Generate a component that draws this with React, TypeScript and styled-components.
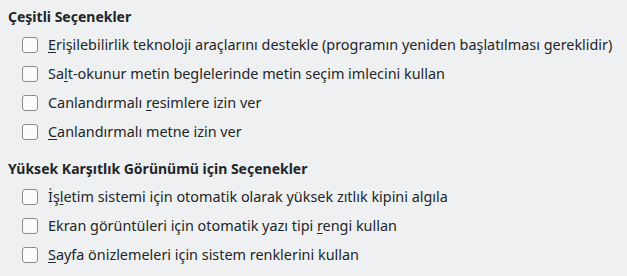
import styled, { createGlobalStyle } from 'styled-components';

const GlobalStyle = createGlobalStyle`
  html, body {
    margin: 0;
    padding: 0;
    background: #eff0f1;
  }
`;

type Option = {
  label: string;
  mnemonic?: number;
};

const groups: { title: string; options: Option[] }[] = [
  {
    title: 'Çeşitli Seçenekler',
    options: [
      { label: 'Erişilebilirlik teknoloji araçlarını destekle (programın yeniden başlatılması gereklidir)', mnemonic: 0 },
      { label: 'Salt-okunur metin beglelerinde metin seçim imlecini kullan', mnemonic: 2 },
      { label: 'Canlandırmalı resimlere izin ver', mnemonic: 14 },
      { label: 'Canlandırmalı metne izin ver', mnemonic: 0 },
    ],
  },
  {
    title: 'Yüksek Karşıtlık Görünümü için Seçenekler',
    options: [
      { label: 'İşletim sistemi için otomatik olarak yüksek zıtlık kipini algıla', mnemonic: 2 },
      { label: 'Ekran görüntüleri için otomatik yazı tipi rengi kullan', mnemonic: 42 },
      { label: 'Sayfa önizlemeleri için sistem renklerini kullan', mnemonic: 0 },
    ],
  },
];

const Label = ({ option }: { option: Option }) => {
  const { label, mnemonic } = option;
  if (mnemonic === undefined) return <>{label}</>;
  return (
    <>
      {label.slice(0, mnemonic)}
      <Mnemonic>{label[mnemonic]}</Mnemonic>
      {label.slice(mnemonic + 1)}
    </>
  );
};

const App = () => {
  return (
    <Page>
      <GlobalStyle />
      {groups.map((group) => (
        <Group key={group.title}>
          <Title>{group.title}</Title>
          <List>
            {group.options.map((option) => (
              <Row key={option.label}>
                <Box />
                <Text>
                  <Label option={option} />
                </Text>
              </Row>
            ))}
          </List>
        </Group>
      ))}
    </Page>
  );
};

const Page = styled.div`
  width: 627px;
  height: 276px;
  box-sizing: border-box;
  padding: 7px 8px 0 8px;
  background: #eff0f1;
  color: #232629;
  font-family: 'Noto Sans', 'Open Sans', sans-serif;
  font-size: 14.4px;
  display: flex;
  flex-direction: column;
  gap: 13px;
`;

const Group = styled.div`
  display: flex;
  flex-direction: column;
`;

const Title = styled.div`
  font-size: 14px;
  font-weight: 700;
  line-height: 20px;
  margin-bottom: 3px;
`;

const List = styled.div`
  display: flex;
  flex-direction: column;
`;

const Row = styled.label`
  display: flex;
  align-items: center;
  height: 29px;
  padding-left: 14px;
  gap: 10px;
`;

const Box = styled.span`
  width: 14px;
  height: 14px;
  border: 1px solid #8a8c8e;
  border-radius: 3px;
  background: #fcfcfc;
  flex-shrink: 0;
`;

const Text = styled.span`
  line-height: 20px;
  white-space: nowrap;
`;

const Mnemonic = styled.span`
  text-decoration: underline;
  text-underline-offset: 2px;
`;

export default App;
